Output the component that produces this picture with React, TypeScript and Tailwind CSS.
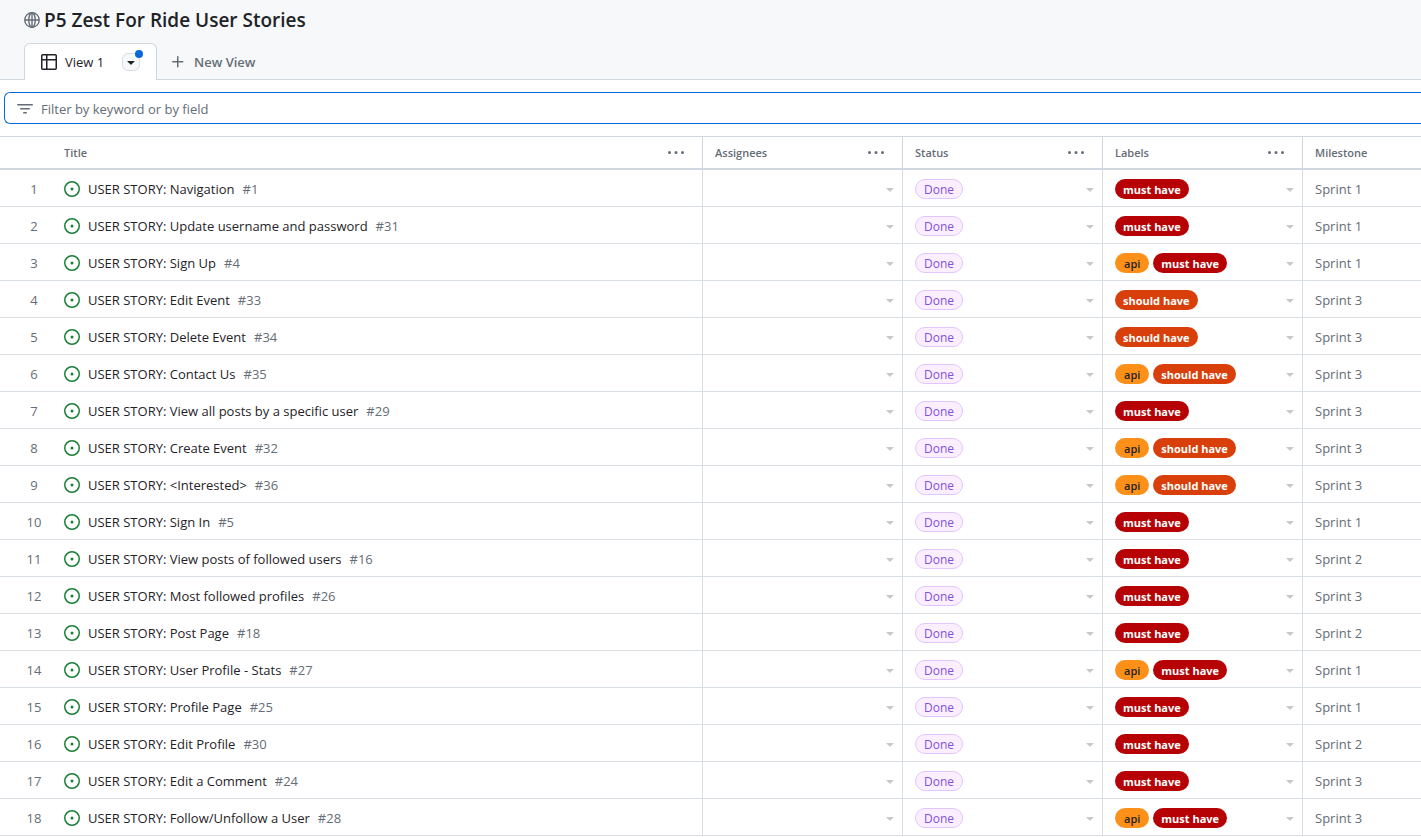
import React from "react";

type Label = "api" | "must have" | "should have";

interface Story {
  title: string;
  issue: number;
  labels: Label[];
  milestone: string;
}

const stories: Story[] = [
  { title: "Navigation", issue: 1, labels: ["must have"], milestone: "Sprint 1" },
  { title: "Update username and password", issue: 31, labels: ["must have"], milestone: "Sprint 1" },
  { title: "Sign Up", issue: 4, labels: ["api", "must have"], milestone: "Sprint 1" },
  { title: "Edit Event", issue: 33, labels: ["should have"], milestone: "Sprint 3" },
  { title: "Delete Event", issue: 34, labels: ["should have"], milestone: "Sprint 3" },
  { title: "Contact Us", issue: 35, labels: ["api", "should have"], milestone: "Sprint 3" },
  { title: "View all posts by a specific user", issue: 29, labels: ["must have"], milestone: "Sprint 3" },
  { title: "Create Event", issue: 32, labels: ["api", "should have"], milestone: "Sprint 3" },
  { title: "<Interested>", issue: 36, labels: ["api", "should have"], milestone: "Sprint 3" },
  { title: "Sign In", issue: 5, labels: ["must have"], milestone: "Sprint 1" },
  { title: "View posts of followed users", issue: 16, labels: ["must have"], milestone: "Sprint 2" },
  { title: "Most followed profiles", issue: 26, labels: ["must have"], milestone: "Sprint 3" },
  { title: "Post Page", issue: 18, labels: ["must have"], milestone: "Sprint 2" },
  { title: "User Profile - Stats", issue: 27, labels: ["api", "must have"], milestone: "Sprint 1" },
  { title: "Profile Page", issue: 25, labels: ["must have"], milestone: "Sprint 1" },
  { title: "Edit Profile", issue: 30, labels: ["must have"], milestone: "Sprint 2" },
  { title: "Edit a Comment", issue: 24, labels: ["must have"], milestone: "Sprint 3" },
  { title: "Follow/Unfollow a User", issue: 28, labels: ["api", "must have"], milestone: "Sprint 3" },
];

const labelStyles: Record<Label, string> = {
  api: "bg-[#fc9018] px-[9px] text-[#1f2328] font-semibold",
  "must have": "bg-[#b60205] px-2 text-white font-bold",
  "should have": "bg-[#d93f0b] px-2 text-white font-bold",
};

const iconPaths = {
  table:
    "M0 1.75C0 .784.784 0 1.75 0h12.5C15.216 0 16 .784 16 1.75v12.5A1.75 1.75 0 0 1 14.25 16H1.75A1.75 1.75 0 0 1 0 14.25ZM6.5 6.5v8h7.75a.25.25 0 0 0 .25-.25V6.5Zm8-1.5V1.75a.25.25 0 0 0-.25-.25H6.5V5Zm-13 1.5v7.75c0 .138.112.25.25.25H5v-8ZM5 5V1.5H1.75a.25.25 0 0 0-.25.25V5Z",
  filter:
    "M.75 3h14.5a.75.75 0 0 1 0 1.5H.75a.75.75 0 0 1 0-1.5ZM3 7.75A.75.75 0 0 1 3.75 7h8.5a.75.75 0 0 1 0 1.5h-8.5A.75.75 0 0 1 3 7.75Zm3 4a.75.75 0 0 1 .75-.75h2.5a.75.75 0 0 1 0 1.5h-2.5a.75.75 0 0 1-.75-.75Z",
  plus: "M7.75 2a.75.75 0 0 1 .75.75V7h4.25a.75.75 0 0 1 0 1.5H8.5v4.25a.75.75 0 0 1-1.5 0V8.5H2.75a.75.75 0 0 1 0-1.5H7V2.75A.75.75 0 0 1 7.75 2Z",
  kebab:
    "M8 9a1.5 1.5 0 1 0 0-3 1.5 1.5 0 0 0 0 3ZM1.5 9a1.5 1.5 0 1 0 0-3 1.5 1.5 0 0 0 0 3Zm13 0a1.5 1.5 0 1 0 0-3 1.5 1.5 0 0 0 0 3Z",
  triangleDown: "m4.427 7.427 3.396 3.396a.25.25 0 0 0 .354 0l3.396-3.396A.25.25 0 0 0 11.396 7H4.604a.25.25 0 0 0-.177.427Z",
  issueOpened:
    "M8 9.5a1.5 1.5 0 1 0 0-3 1.5 1.5 0 0 0 0 3ZM8 0a8 8 0 1 1 0 16A8 8 0 0 1 8 0ZM1.5 8a6.5 6.5 0 1 0 13 0 6.5 6.5 0 0 0-13 0Z",
};

function Icon({ name, className = "" }: { name: keyof typeof iconPaths; className?: string }) {
  return (
    <svg viewBox="0 0 16 16" fill="currentColor" aria-hidden="true" className={`size-4 shrink-0 ${className}`}>
      <path d={iconPaths[name]} />
    </svg>
  );
}

function GlobeIcon() {
  return (
    <svg viewBox="0 0 16 16" fill="none" stroke="currentColor" strokeWidth="1.4" aria-hidden="true" className="size-4 shrink-0">
      <circle cx="8" cy="8" r="7.25" />
      <ellipse cx="8" cy="8" rx="3.25" ry="7.25" />
      <path d="M1 8h14M8 1v14" />
    </svg>
  );
}

function ColumnHeader({ name, menu = true }: { name: string; menu?: boolean }) {
  return (
    <div className="flex items-center justify-between">
      <span className="pt-px">{name}</span>
      {menu && (
        <button type="button" aria-label={`${name} column options`} className="mr-2 flex w-9 justify-center">
          <Icon name="kebab" />
        </button>
      )}
    </div>
  );
}

function CellMenu({ name }: { name: string }) {
  return (
    <button type="button" aria-label={`Edit ${name}`} className="mr-1 ml-auto text-[#c8c9cb]">
      <Icon name="triangleDown" />
    </button>
  );
}

export default function App() {
  return (
    <div className="min-h-screen overflow-x-hidden bg-white font-['Open_Sans','Noto_Sans',sans-serif] text-[13px] leading-5 text-[#656d76]">
      <header className="border-b border-[#d0d7de] bg-[#f6f8fa]">
        <div className="flex h-[43px] items-center gap-1 pb-1 pl-6">
          <GlobeIcon />
          <h1 className="pt-px text-[19px] leading-7 font-semibold text-[#1f2328]">P5 Zest For Ride User Stories</h1>
        </div>
        <nav className="-mb-px flex pl-6" aria-label="Views">
          <div className="flex h-[37px] w-[133px] items-center rounded-t-md border border-b-0 border-[#d0d7de] bg-white pl-4 text-[#1f2328]">
            <a href="#view-1" className="flex items-center gap-2">
              <Icon name="table" />
              View 1
            </a>
            <button
              type="button"
              aria-label="View options"
              className="relative mr-4 ml-auto flex size-[18px] items-center justify-center rounded-md border border-[#d8dee4] bg-[#f6f8fa]"
            >
              <Icon name="triangleDown" />
              <span className="absolute -top-1 -right-1 size-2 rounded-full bg-[#0969da]" />
            </button>
          </div>
          <button type="button" className="ml-[13px] flex items-center gap-2 font-semibold">
            <Icon name="plus" />
            New View
          </button>
        </nav>
      </header>

      <div className="py-3 pl-1">
        <label className="flex h-8 items-center gap-2 rounded-l-md border border-r-0 border-[#0969da] pt-px pl-3">
          <Icon name="filter" />
          <input
            type="text"
            aria-label="Filter by keyword or by field"
            placeholder="Filter by keyword or by field"
            className="w-full bg-transparent outline-none placeholder:text-[#656d76]"
          />
        </label>
      </div>

      <table className="w-full table-fixed border-separate border-spacing-0">
        <colgroup>
          <col className="w-16" />
          <col className="w-[639px]" />
          <col className="w-[200px]" />
          <col className="w-[200px]" />
          <col className="w-[200px]" />
          <col />
        </colgroup>
        <thead>
          <tr className="h-[34px] text-left text-[11px] [&>th]:border-t [&>th]:border-b-2 [&>th]:border-[#d0d7de] [&>th]:font-semibold">
            <th aria-label="Row number" />
            <th className="border-r"><ColumnHeader name="Title" /></th>
            <th className="border-r pl-3"><ColumnHeader name="Assignees" /></th>
            <th className="border-r pl-3"><ColumnHeader name="Status" /></th>
            <th className="border-r pl-3"><ColumnHeader name="Labels" /></th>
            <th className="pl-3"><ColumnHeader name="Milestone" menu={false} /></th>
          </tr>
        </thead>
        <tbody>
          {stories.map((story, index) => (
            <tr key={story.issue} className="h-[37px] [&>td]:border-b [&>td]:border-[#d8dee4] [&>td]:pt-[2px]">
              <td className="pl-1 text-center">{index + 1}</td>
              <td className="border-r">
                <div className="flex items-center gap-2">
                  <Icon name="issueOpened" className="text-[#1a7f37]" />
                  <a href={`#issue-${story.issue}`} className="text-[#1f2328]">USER STORY: {story.title}</a>
                  <span>#{story.issue}</span>
                </div>
              </td>
              <td className="border-r pl-3">
                <div className="flex items-center"><CellMenu name="assignees" /></div>
              </td>
              <td className="border-r pl-3">
                <div className="flex items-center">
                  <span className="h-5 rounded-full border border-[#e2c5ff] bg-[#fbefff] px-2 pt-px text-[12px] leading-[18px] font-medium text-[#8250df]">
                    Done
                  </span>
                  <CellMenu name="status" />
                </div>
              </td>
              <td className="border-r pl-3">
                <div className="flex items-center gap-1">
                  {story.labels.map((label) => (
                    <span key={label} className={`h-5 rounded-full pt-px text-[11px] leading-5 ${labelStyles[label]}`}>
                      {label}
                    </span>
                  ))}
                  <CellMenu name="labels" />
                </div>
              </td>
              <td className="pl-3">{story.milestone}</td>
            </tr>
          ))}
        </tbody>
      </table>
    </div>
  );
}
